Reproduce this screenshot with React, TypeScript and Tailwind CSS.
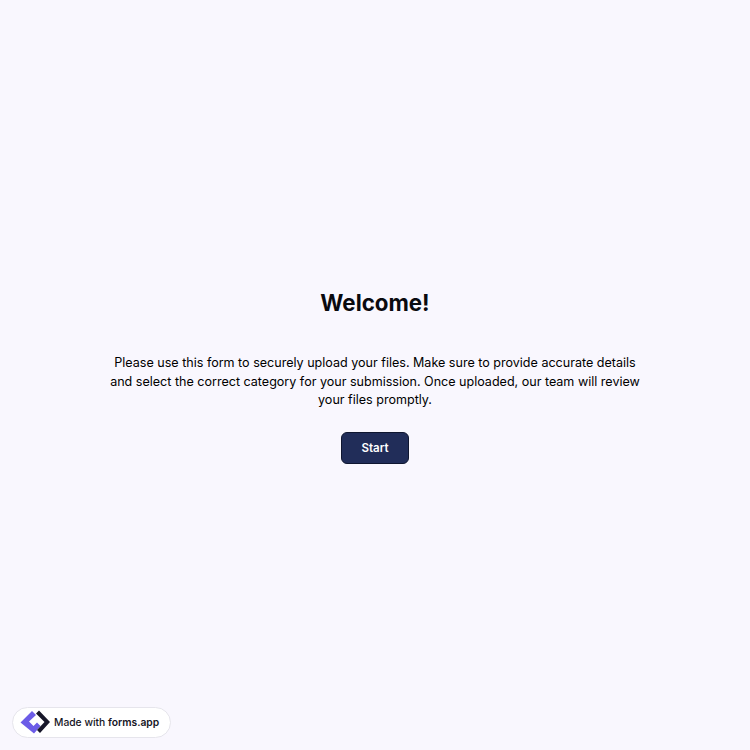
import React from "react";

function Logo() {
  return (
    <svg width="32" height="26" viewBox="0 0 32 26" fill="none">
      <path d="M13 1 L17 5 L10 11.5 L14.5 16 L18 12.5 L21.5 16 L15 23.5 L1.5 12.5 Z" fill="#6C5CE7" />
      <path d="M20 0.5 L31 12 L21 23 L18 20 L25.5 12 L17 3.5 Z" fill="#17172a" />
    </svg>
  );
}

export default function App() {
  return (
    <div className="relative min-h-[750px] bg-[#f9f7fe] font-['Inter',sans-serif] text-black overflow-hidden">
      <div className="flex flex-col items-center pt-[288px]">
        <h1 className="text-[22.3px] leading-[30px] font-bold text-[#0a0a0f]">Welcome!</h1>
        <p className="mt-[36px] w-[540px] text-center text-[12.55px] leading-[18.5px] text-black">
          Please use this form to securely upload your files. Make sure to provide accurate details and select the correct category for your submission. Once uploaded, our team will review your files promptly.
        </p>
        <button className="mt-[22px] w-[68px] h-[32px] pt-[2px] rounded-md bg-[#212d59] border border-[#0f1630] text-white text-[11.5px] font-semibold">
          Start
        </button>
      </div>
      <div className="absolute left-[12px] bottom-[12px] flex items-center gap-[3px] h-[31px] w-[159px] pl-[6px] rounded-full bg-white border border-[#e6e5ec] text-[10.3px] font-medium text-[#15151f]">
        <Logo />
        <span>Made with <span className="font-semibold">forms.app</span></span>
      </div>
    </div>
  );
}
